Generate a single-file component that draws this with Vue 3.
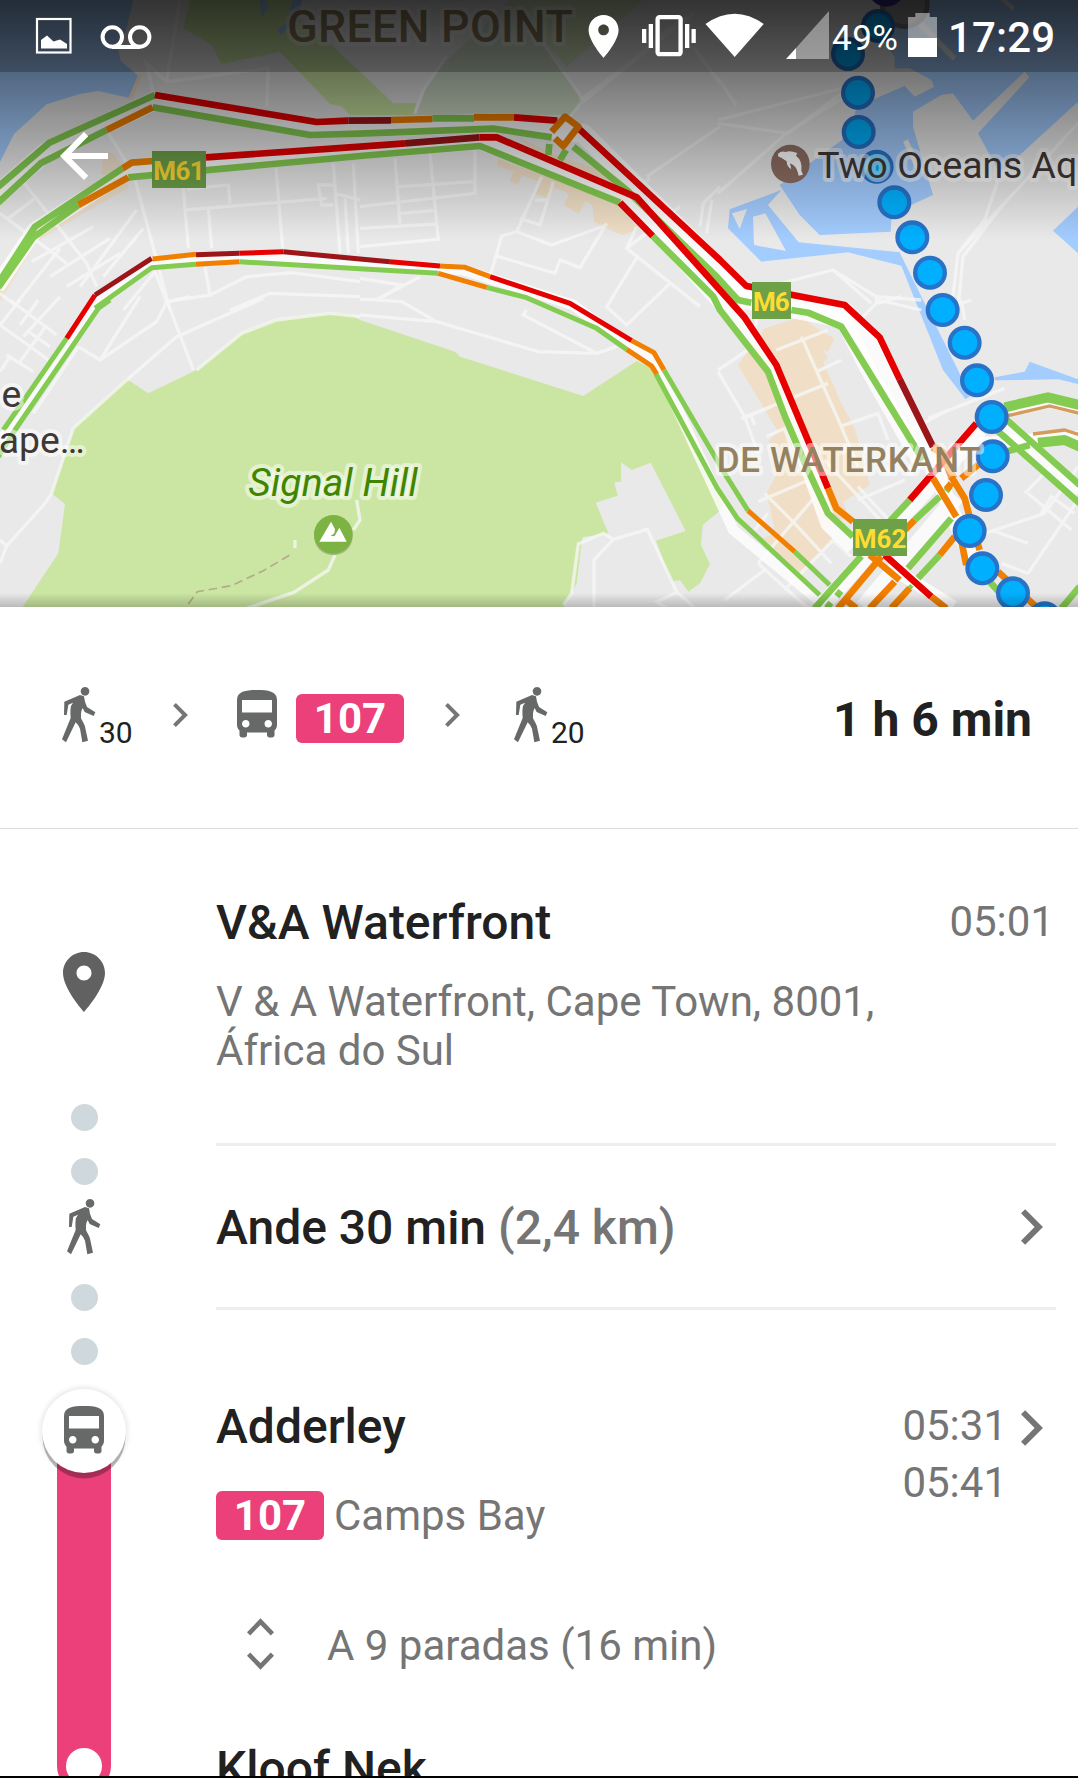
<script setup>
// Map geometry uses a canvas of 3234 x 1821 units, three per screen pixel.
const stops = [
  [480, 78], [390, 162], [420, 278], [422, 396], [476, 500], [529, 607],
  [583, 712], [636, 818], [674, 930], [740, 1028], [777, 1141], [821, 1251],
  [824, 1369], [804, 1485], [755, 1593], [793, 1705], [885, 1780], [980, 1855],
].map(([x, y]) => ({ x: x + 2154, y }))

const walkPath =
  'M7 44L54 24 66 28 69 44 75 60 100 76 95 87 68 75 62 63Q57 72 57 80V94L65 109Q70 118 71 128L78 161 61 166 54 125Q50 114 41 106L12 166 0 157 26 93Q24 70 27 57L33 47 19 53 14 84H6ZM69 0a13 13 0 1 0 .1 0z'
const busPath =
  'M4 16c0 .88.39 1.67 1 2.22V20c0 .55.45 1 1 1h1c.55 0 1-.45 1-1v-1h8v1c0 .55.45 1 1 1h1c.55 0 1-.45 1-1v-1.78c.61-.55 1-1.34 1-2.22V6c0-3.5-3.58-4-8-4s-8 .5-8 4v10zm3.5 1c-.83 0-1.5-.67-1.5-1.5S6.67 14 7.5 14s1.5.67 1.5 1.5S8.33 17 7.5 17zm9 0c-.83 0-1.5-.67-1.5-1.5s.67-1.5 1.5-1.5 1.5.67 1.5 1.5-.67 1.5-1.5 1.5zm1.500-6H6V6h12v5z'
const chevronPath = 'M10 6L8.590 7.410 13.170 12l-4.580 4.590L10 18l6-6z'
const pinPath =
  'M12 2C8.130 2 5 5.130 5 9c0 5.250 7 13 7 13s7-7.750 7-13c0-3.870-3.130-7-7-7zm0 9.500c-1.380 0-2.500-1.120-2.500-2.500s1.120-2.500 2.500-2.500 2.500 1.120 2.500 2.500-1.120 2.500-2.500 2.500z'
</script>

<template>
  <main class="screen">
    <header class="map">
      <svg class="canvas" viewBox="0 0 3234 1821">
        <rect width="3234" height="1821" fill="#e9e9e9" />

        <!-- parks -->
        <g fill="#cbe6a3">
          <path d="M570 0L550 84 636 135 664 192 840 155 990 312 1025 318 1050 345H1240L1248 310H1180L1080 215 1000 140 900 60V0z" />
          <path d="M1530 0H1930L1700 200 1640 130z" opacity=".6" />
          <path d="M65 1825L175 1660 195 1512 155 1480 220 1285 380 1137 445 1180 590 1110 725 997 830 958 990 938 1050 942 1080 960 1365 1055 1380 1070 1750 1188 1910 1083 1955 1105 2170 1515 2160 1532 2108 1575 2103 1635 2130 1692 2100 1750 2065 1775 2040 1740 2013 1745 1968 1622 2057 1593 1952 1388 1895 1410 1863 1387 1863 1445 1843 1447 1853 1487 1787 1508 1825 1600 1747 1612 1730 1750 1712 1785 1688 1825z" />
        </g>
        <path fill="#d2e0cb" d="M1244 345L1290 240 1340 180 1450 80 1530 0 1640 130 1748 300 1715 345z" />

        <!-- water -->
        <g fill="#a3ccff">
          <path d="M0 0H400L378 90 355 150 362 182 415 228 390 294 295 273 240 282 140 313 42 402 0 486z" />
          <path d="M780 0h18l8 20-22 35zM830 90l35-25 12-65h30l-20 60-45 45z" />
          <path d="M2694 0H3234V305L2999 520 2934 400 3088 232 3074 215 2919 362 2859 280 2824 285 2739 335V380L2799 585 2734 615 2674 660 2672 695 2459 705 2399 645 2339 555 2554 400 2569 320 2714 258 2744 290 2802 260 2794 240 2729 205H2684V170L2654 130z" />
          <path d="M2344 570L2304 615 2396 727 2699 757 2784 930 2874 1110 2909 1190 2896 1197 2829 1110 2704 797 2544 757 2284 785 2184 685 2189 628z" />
          <path d="M3159 692L3234 620V760zM2984 1132L3074 1115 3089 1085 3234 1138V1152L3174 1138 2984 1141z" />
        </g>
        <g fill="#e9e9e9">
          <path d="M2754 50L2869 170 2859 182 2744 70zM3000 0h20l24 20-6 12zM2196 640l45-13-22 60zM2259 650l37-10 62 113-96-18zM2709 425l14-7 45 90-16 10z" />
        </g>

        <!-- built-up blocks -->
        <g fill="#f0dfc6">
          <path d="M310 455l30 5 35 50-110 45-110 85-90 100L0 850v55l110-180 140-85 135-75-10-50-70 10z" opacity=".8" />
          <path d="M415 222l10 5-28 70-35-3 25-4z" />
          <g transform="translate(1080 0)">
            <path d="M415 478l360 130 60 80-48 18-85-40-5-50-20-15-20 40-45-25 15-35-45-20-15 35-40-15 12-35-55-20-10 30-25-12 12-30-50-15zM470 410l130 60 180 60 20 30-200-50z" />
          </g>
          <path d="M2294 985l110-35 60 45 40 20-20 40-15-5 15 25-15 10 55 125 40 75 45 170-80 50 15 40-70 45 25 30-100 100-110-105 35-15-10-60-15-60 30-55-15-30 20-40-30-30 30-30-120-200z" />
        </g>

        <!-- minor streets -->
        <g class="street">
          <path d="M0 640L200 790M70 545L260 790 290 860M25 655L105 595M95 785L280 680M150 830L330 715M200 860L360 760M50 910L180 745M0 880L45 915M240 860L410 630M310 830L430 685M325 400L400 520 510 930M370 930L465 815 500 905M430 180L500 245 805 205 800 320M440 190L460 280M500 240L540 0" />
          <path d="M550 565L565 745M555 630L980 595M625 625L635 745M560 567L685 555 690 610M828 505L848 745M1000 490L1020 760M1060 490L1075 760M1000 555H955L965 615H1000M1035 595L1045 760M1005 580L1080 600M615 800L630 885 500 905M630 885L740 830 875 818 1080 845M690 930L810 880 1080 890" />
          <g transform="translate(1080 0)">
            <path d="M105 475L120 670M210 460L235 718 0 740M345 450V580L0 620M115 560L345 545M120 640L220 632M0 685L230 672M545 530L470 695 425 708 390 830M580 545L540 675 480 655M470 695L575 735 740 675M410 768L585 820 600 780 660 803 740 670M525 600H560M800 745L960 620M830 680L800 745 1020 920M835 765L740 920 800 975 930 850M1080 560L1030 610 1020 680M1055 600L1040 700" />
            <path d="M165 340L190 270 260 170M550 130L670 300 630 350M660 300L820 180 960 60M670 305L1000 40M860 530L1080 380M870 535L800 590M1000 140L1080 250M500 930L490 945 710 1060 770 1040M0 835L125 855 50 900 125 905 230 965 535 1055 710 1060M0 945L230 965M50 900L180 830M0 898H60" />
          </g>
          <g transform="translate(2154 0)">
            <path d="M0 360L370 265M0 370L210 400 370 280M0 235L55 315M0 580L205 400 380 290M1080 370L850 620 720 760 700 930M850 620L735 770 720 930M840 540L800 660 720 760M110 870L345 810 475 890 610 900M345 810L460 910M475 885v25l-40 40M480 900L610 930" />
          </g>
          <g transform="translate(0 900)">
            <path d="M30 0L170 105M0 75L105 150 145 180M115 0L60 75M60 0L0 75M70 110L180 -10M60 185L140 75M30 170L0 215M85 95L150 140M100 215L20 165M235 140L300 180 420 -10M235 140L100 340M220 385L380 240 530 110 790 -5M500 0L580 210M500 5L470 65 300 180M220 385L155 580 135 610 20 738 0 720M20 738L0 790M505 5L570 -10M590 210L725 100 830 60 990 40 1080 50M740 925L880 878 985 810 1005 765M1060 690L1080 660 1070 600M885 720V745" />
            <path d="M1690 915L1715 880 1735 732 1810 700 1840 718 1942 688 2030 875 2080 920M1840 718L1782 780V925M2035 875L1970 905 2000 925M1820 -60" />
          </g>
          <g transform="translate(2154 900)">
            <path d="M0 210L90 150M120 40L110 90M250 110L370 380 420 500M175 150L330 90M70 355L330 250M295 215L370 180M0 215L80 350 120 460M75 355L160 320M110 375L100 350M365 380L480 340 510 420M145 410L200 385 230 480M120 605L320 520M140 580L230 670 340 790M120 790L240 650 300 580M150 640L110 690M200 870L345 720 400 770M120 790L270 925M260 540L340 640M420 600L560 540M320 480L560 740M420 560L540 690M630 355L860 265M700 20L760 0M480 10L550 -10M730 0L740 60M920 580L1000 500 1080 570M930 580L1060 690M800 700L980 640 1080 500M820 690L930 730M930 820L1080 600M850 790L930 820M970 640L1000 590 1070 640M560 400L690 330M20 900L140 810" />
          </g>
        </g>
        <path class="trail" d="M565 1812L592 1775 695 1757 790 1712 878 1660" />

        <!-- white carriageways -->
        <g class="casing">
          <path d="M-10 585L135 458 463 303 940 386 1480 370 1660 390 1750 400 2160 808 2240 885 2534 935 2638 1075 2810 1410" stroke-width="58" />
          <path d="M-10 860L105 690 390 508 1440 425 1890 602 2160 905 2225 970 2325 1120 2485 1570 2560 1640" stroke-width="48" />
          <path d="M-10 1340L290 905 455 790 850 770 1390 810 1720 915 1880 1035 1965 1080 2200 1590 2480 1820" stroke-width="32" />
          <path d="M2160 820L2240 905 2530 960 2600 1100 2770 1400M2980 1240L3234 1480M2940 1290L2460 1825M2870 1490L2590 1820M2800 1400L2900 1640 2950 1720" stroke-width="48" />
          <path d="M2700 1720L2860 1820M3030 1230L3150 1205 3240 1228M2940 1330L3240 1310" stroke-width="38" />
        </g>

        <!-- traffic -->
        <g class="traffic">
          <path class="g" d="M-5 560L148 428 465 285M-5 608L122 490 320 390M458 322L930 405 1080 401 1480 386 1655 412M1297 355H1422" />
          <path class="g" d="M-5 850L105 680 368 505M-5 862L100 712 235 615M385 532L1080 468 1440 438 1860 608M1958 708L2140 890 2160 930 2304 1115 2355 1250 2415 1390 2484 1540 2559 1610" />
          <path class="g" d="M1720 440L1880 570 2150 830 2214 900 2254 908M2374 930L2424 938 2524 980 2769 1380M1648 432L1645 465M1698 450L1680 480" />
          <path class="r" d="M465 285L950 366 1045 362M1542 352L1672 362M618 472L1080 440 1215 430M1438 412H1490L1910 592 2232 950 2329 1095 2484 1465M1860 608L1958 708M1730 380L2160 780 2239 858 2534 915 2639 1012 2699 1138M2929 1270L2729 1500M2654 1665L2794 1790" />
          <path class="d" d="M1045 362L1173 361M1215 430L1438 412M2699 1138L2799 1340" />
          <path class="o" d="M1173 360L1297 357M1422 352H1542M320 390L458 322M368 505L395 488 460 483M235 615L385 532M1655 395L1695 350 1735 380 1690 438 1665 415M2484 1465L2509 1525 2559 1565M2794 1790L2839 1825" />
        </g>
        <g class="traffic thin">
          <path class="g" d="M285 925L455 803 588 793M718 785L1080 806 1315 820M1460 862L1580 893 1790 985 1880 1048M200 1015L10 1290M330 900L295 925 45 1290 -5 1370M1992 1110L2180 1430 2244 1532M1968 1122L2152 1465 2212 1555 2459 1785M2384 1655L2489 1755" />
          <path class="r" d="M200 1015L285 885M718 760L850 755M1170 785L1320 798M1470 830L1710 910 1895 1022" />
          <path class="d" d="M285 885L455 775M588 764L718 760M850 755L1080 777 1170 785" />
          <path class="o" d="M458 777L588 763M588 793L718 785M1320 798L1395 802 1470 830M1315 820L1460 862M1895 1022L1962 1058 1992 1110M1880 1048L1955 1098 1970 1122M2244 1532L2384 1655" />
        </g>
        <g class="traffic" transform="translate(2154 900)">
          <path class="g" d="M860 322L990 292 1085 315M960 428L1040 420 1085 440" stroke-width="30" />
          <path class="g" d="M850 345L1085 555M830 385L1085 610M865 455L935 435M575 600L510 670M430 768L290 925M665 590L590 660M700 655L570 805M665 765L600 835M815 845L860 895M1085 860L1030 925M355 875l15 12M325 910l15 12M570 860l10 8M683 560l15 12" />
          <path class="o" d="M590 660L550 700M490 770L360 925M575 865L520 925M530 845L455 925M710 710L665 765M645 535L715 650M725 700L745 795M700 530L740 595 760 670 785 750M780 495L730 535M700 550L685 568M455 765L545 840M840 815L960 925M390 905L415 925" />
          <path class="o" d="M645 440L675 460 705 535" opacity=".7" stroke-width="26" />
          <path stroke="#d59b5b" stroke-width="10" d="M870 347L995 318 1085 340M945 402L1040 390 1085 404" />
        </g>

        <!-- route -->
        <g class="route">
          <circle cx="2714" cy="12" r="68" fill="#999" stroke="#777" stroke-width="14" />
          <circle cx="2659" cy="-35" r="55" fill="#33308f" />
          <circle v-for="(s, i) in stops" :key="i" :cx="s.x" :cy="s.y" r="44.500" fill="#00b0ff" stroke="#2873c8" stroke-width="13" />
        </g>

        <!-- road shields -->
        <g class="shield">
          <rect x="456" y="453" width="162" height="111" />
          <text x="537" y="540" textLength="154">M61</text>
          <rect x="2256" y="846" width="117" height="111" />
          <text x="2314" y="933" textLength="110">M6</text>
          <rect x="2559" y="1557" width="162" height="111" />
          <text x="2640" y="1644" textLength="158">M62</text>
        </g>

        <!-- place labels -->
        <g class="label">
          <text class="district" x="862" y="127" font-size="134" textLength="856">GREEN POINT</text>
          <text class="district" x="2150" y="1415" font-size="105" textLength="792">DE WATERKANT</text>
          <text class="peak" x="745" y="1487" font-size="117" textLength="508">Signal Hill</text>
          <text x="2452" y="533" font-size="112">Two Oceans Aquarium</text>
          <text x="64" y="1220" font-size="112" text-anchor="end">e</text>
          <text x="254" y="1360" font-size="112" text-anchor="end">ape…</text>
        </g>
        <circle cx="1000" cy="1608" r="58" fill="#000" opacity=".2" />
        <circle cx="1000" cy="1603" r="58" fill="#7cb342" />
        <path fill="#fff" d="M958 1625L993 1565 1005 1588 1003 1600 992 1608H1004L1018 1583 1040 1625z" />
        <circle cx="2371" cy="492" r="58" fill="#8d6e63" />
        <path fill="#fff" d="M2334 461Q2344 452 2358 456Q2368 450 2392 459L2388 467Q2408 482 2404 512L2409 524 2396 527 2393 516Q2389 498 2370 490L2374 508Q2360 499 2360 484Q2347 474 2334 469z" />
      </svg>
      <div class="shade"></div>
      <div class="edge"></div>
      <div class="overlay">
        <div class="statusbar">
          <svg viewBox="0 0 1078 72" width="1078" height="72">
            <g fill="none" stroke="#fff">
              <rect x="37" y="19" width="33.500" height="33.500" stroke-width="2.200" />
              <g stroke-width="4"><circle cx="112.300" cy="37" r="9.700" /><circle cx="139.700" cy="37" r="9.700" /><path d="M112 47h28" /></g>
              <rect x="657.600" y="17.200" width="23" height="37" rx="2" stroke-width="4.300" />
            </g>
            <g fill="#fff">
              <path d="M41 48.500V40l6-4.500 6.500 6 6.500-2 7 4.500v4.500z" />
              <path transform="translate(577.900 10.700) scale(2.140)" :d="pinPath" />
              <path d="M642 29h4.300v14H642zM648.700 24h4.300v24h-4.300zM685 24h4.300v24H685zM691.500 29h4.300v14h-4.300zM734.700 57L705.500 24Q734.700 3.500 763.700 24z" />
              <path opacity=".42" d="M796 59V48L829 11V59z" />
              <path d="M786 59L796 48V59z" />
              <path opacity=".45" d="M908 17h7.300v-4h14.400v4H937v21H908z" />
              <path d="M908 38h29v19H908z" />
              <text x="832" y="50" font-size="35" textLength="66">49%</text>
              <text x="948" y="52" font-size="42" font-weight="500" textLength="107">17:29</text>
            </g>
          </svg>
        </div>
        <svg class="back" viewBox="4 4 16 16" width="48" height="48"><path fill="#fff" d="M20 11H7.830l5.590-5.590L12 4l-8 8 8 8 1.410-1.410L7.830 13H20v-2z" /></svg>
      </div>
    </header>

    <section class="summary">
      <svg class="walk" viewBox="0 0 102 168"><path :d="walkPath" /></svg>
      <span class="mins">30</span>
      <svg class="sep" viewBox="8.590 6 7.410 12"><path :d="chevronPath" /></svg>
      <svg class="bus" viewBox="4 2 16 19"><path :d="busPath" /></svg>
      <span class="badge">107</span>
      <svg class="sep second" viewBox="8.590 6 7.410 12"><path :d="chevronPath" /></svg>
      <svg class="walk last" viewBox="0 0 102 168"><path :d="walkPath" /></svg>
      <span class="mins">20</span>
      <strong class="duration">1 h 6 min</strong>
    </section>

    <section class="details">
      <div class="rail">
        <svg class="pin" viewBox="5 2 14 20"><path :d="pinPath" /></svg>
        <i class="dot first"></i>
        <i class="dot"></i>
        <svg class="walk" viewBox="0 0 102 168"><path :d="walkPath" /></svg>
        <i class="dot after"></i>
        <i class="dot"></i>
        <div class="disc"><svg class="bus" viewBox="4 2 16 19"><path :d="busPath" /></svg></div>
        <div class="line"><i></i></div>
      </div>
      <div class="steps">
        <article class="step origin">
          <div class="head">
            <h2>V&amp;A Waterfront</h2>
            <time>05:01</time>
          </div>
          <p>V &amp; A Waterfront, Cape Town, 8001,<br />África do Sul</p>
        </article>
        <article class="step walking">
          <h2>Ande 30 min <span>(2,4 km)</span></h2>
          <svg class="go" viewBox="8.590 6 7.410 12"><path :d="chevronPath" /></svg>
        </article>
        <article class="step ride">
          <div class="head">
            <h2>Adderley</h2>
            <div class="times"><time>05:31</time><time>05:41</time></div>
            <svg class="go" viewBox="8.590 6 7.410 12"><path :d="chevronPath" /></svg>
          </div>
          <div class="service"><span class="badge">107</span><span>Camps Bay</span></div>
          <div class="stops">
            <svg viewBox="0 0 27 52" width="27" height="52"><path fill="none" stroke="#757575" stroke-width="4.600" d="M1.600 15.800L13.500 3.600 25.400 15.800M1.600 36.200L13.500 48.400 25.400 36.200" /></svg>
            <span>A 9 paradas (16 min)</span>
          </div>
          <h2 class="end">Kloof Nek</h2>
        </article>
      </div>
    </section>
    <div class="bottom"></div>
  </main>
</template>

<style>
body { margin: 0; background: #fff; }
</style>

<style scoped>
.screen {
  width: 1078px;
  height: 1778px;
  overflow: hidden;
  display: flex;
  flex-direction: column;
  background: #fff;
  color: #212121;
  font-family: Roboto, sans-serif;
}
svg { display: block; flex: none; }

.map { position: relative; height: 607px; flex: none; overflow: hidden; }
.canvas { width: 1078px; height: 607px; }
.shade {
  position: absolute;
  inset: 0 0 auto 0;
  height: 240px;
  background: linear-gradient(rgba(0, 0, 0, .71), rgba(0, 0, 0, 0));
}
.edge {
  position: absolute;
  inset: auto 0 0 0;
  height: 14px;
  background: linear-gradient(rgba(0, 0, 0, 0), rgba(0, 0, 0, .2));
}
.overlay { position: absolute; inset: 0; }
.statusbar { height: 72px; background: rgba(0, 0, 0, .24); font-family: Roboto, sans-serif; }
.back { margin: 60px 0 0 60px; }

.street path { fill: none; stroke: #f7f7f7; stroke-width: 10; opacity: .75; }
.trail { fill: none; stroke: #b5aa8c; stroke-width: 5; stroke-dasharray: 26 14; }
.casing path { fill: none; stroke: #fff; stroke-linejoin: round; opacity: .78; }
.traffic { fill: none; stroke-width: 20; stroke-linejoin: round; }
.thin { stroke-width: 15; }
.g { stroke: #84cb51; }
.r { stroke: #e60000; }
.d { stroke: #9c1519; }
.o { stroke: #f17f00; }
.shield rect { fill: #6da047; }
.shield text { fill: #ffdc32; font-size: 78px; font-weight: 700; text-anchor: middle; }
.label text {
  fill: #3f3835;
  stroke: rgba(255, 255, 255, .5);
  stroke-width: 24;
  stroke-linejoin: round;
  paint-order: stroke;
}
.label .district { fill: #93815f; font-weight: 500; }
.label .peak { fill: #3f8500; font-style: italic; }

.summary {
  display: flex;
  align-items: flex-start;
  box-sizing: border-box;
  height: 222px;
  flex: none;
  padding: 80px 46px 0 62px;
  border-bottom: 1px solid #dcdcdc;
}
.walk { width: 34px; height: 56px; fill: #666967; }
.bus { width: 40px; height: 47.500px; fill: #666967; }
.mins { width: 34px; margin: 31px 0 0 3px; font-size: 30px; line-height: 30px; }
.sep { width: 15px; height: 24px; margin: 16px 0 0 40px; fill: #757575; }
.sep.second { margin-left: 41px; }
.summary .bus { margin: 3px 0 0 49px; }
.badge {
  width: 108px;
  height: 49px;
  border-radius: 6px;
  background: #ec407a;
  color: #fff;
  font-size: 42px;
  font-weight: 700;
  line-height: 49px;
  text-align: center;
}
.summary .badge { margin: 7px 0 0 19px; }
.last { margin-left: 54px; }
.duration { margin: 5px 0 0 auto; font-size: 48px; font-weight: 700; line-height: 56px; }

.details { display: flex; height: 947px; flex: none; overflow: hidden; }
.rail { display: flex; flex-direction: column; align-items: center; width: 168px; flex: none; }
.pin { width: 42px; height: 60px; margin-top: 123px; fill: #616161; }
.dot { flex: none; width: 27px; height: 27px; margin-top: 27px; border-radius: 50%; background: #cfd8dc; }
.dot.first { margin-top: 92px; }
.dot.after { margin-top: 29px; }
.rail .walk { margin-top: 14px; }
.disc {
  display: flex;
  flex: none;
  justify-content: center;
  align-items: flex-start;
  box-sizing: border-box;
  width: 84px;
  height: 84px;
  margin-top: 24px;
  padding-top: 17px;
  border-radius: 50%;
  background: #fff;
  z-index: 1;
  box-shadow: 0 6px 0 -0.500px rgba(0, 0, 0, .27), 0 0 5px 2px rgba(0, 0, 0, .09);
}
.line {
  display: flex;
  flex: none;
  justify-content: center;
  align-items: flex-end;
  box-sizing: border-box;
  width: 54px;
  height: 362px;
  margin-top: -42px;
  padding-bottom: 9px;
  border-radius: 0 0 27px 27px;
  background: #ec407a;
}
.line i { width: 36px; height: 36px; border-radius: 50%; background: #fff; }

.steps { width: 840px; margin-left: 48px; color: #757575; font-size: 42px; line-height: 49px; }
.step { box-sizing: border-box; }
h2 { margin: 0; color: #212121; font-size: 48px; font-weight: 500; line-height: 56px; }
h2 span { color: #757575; }
p { margin: 26px 0 0; }
.head { display: flex; align-items: flex-start; }
.origin { height: 317px; padding-top: 66px; border-bottom: 3px solid #eee; }
.origin time { margin: 2px 2px 0 auto; }
.walking {
  display: flex;
  justify-content: space-between;
  align-items: center;
  height: 164px;
  padding-right: 13px;
  border-bottom: 3px solid #eee;
}
.walking h2 { padding-top: 3px; }
.go { width: 22px; height: 36px; fill: #757575; }
.ride { padding-top: 89px; }
.times { display: flex; flex-direction: column; margin: -2px 14px 0 auto; line-height: 57px; }
.ride .head { height: 92px; padding-right: 13px; }
.ride .go { margin-top: 11px; }
.service { display: flex; gap: 10px; }
.stops { display: flex; align-items: center; gap: 53px; height: 52px; margin: 78px 0 0 31px; }
.stops span { padding-top: 2px; }
.end { margin-top: 71px; }
.bottom { height: 2px; flex: none; background: #000; }
</style>
